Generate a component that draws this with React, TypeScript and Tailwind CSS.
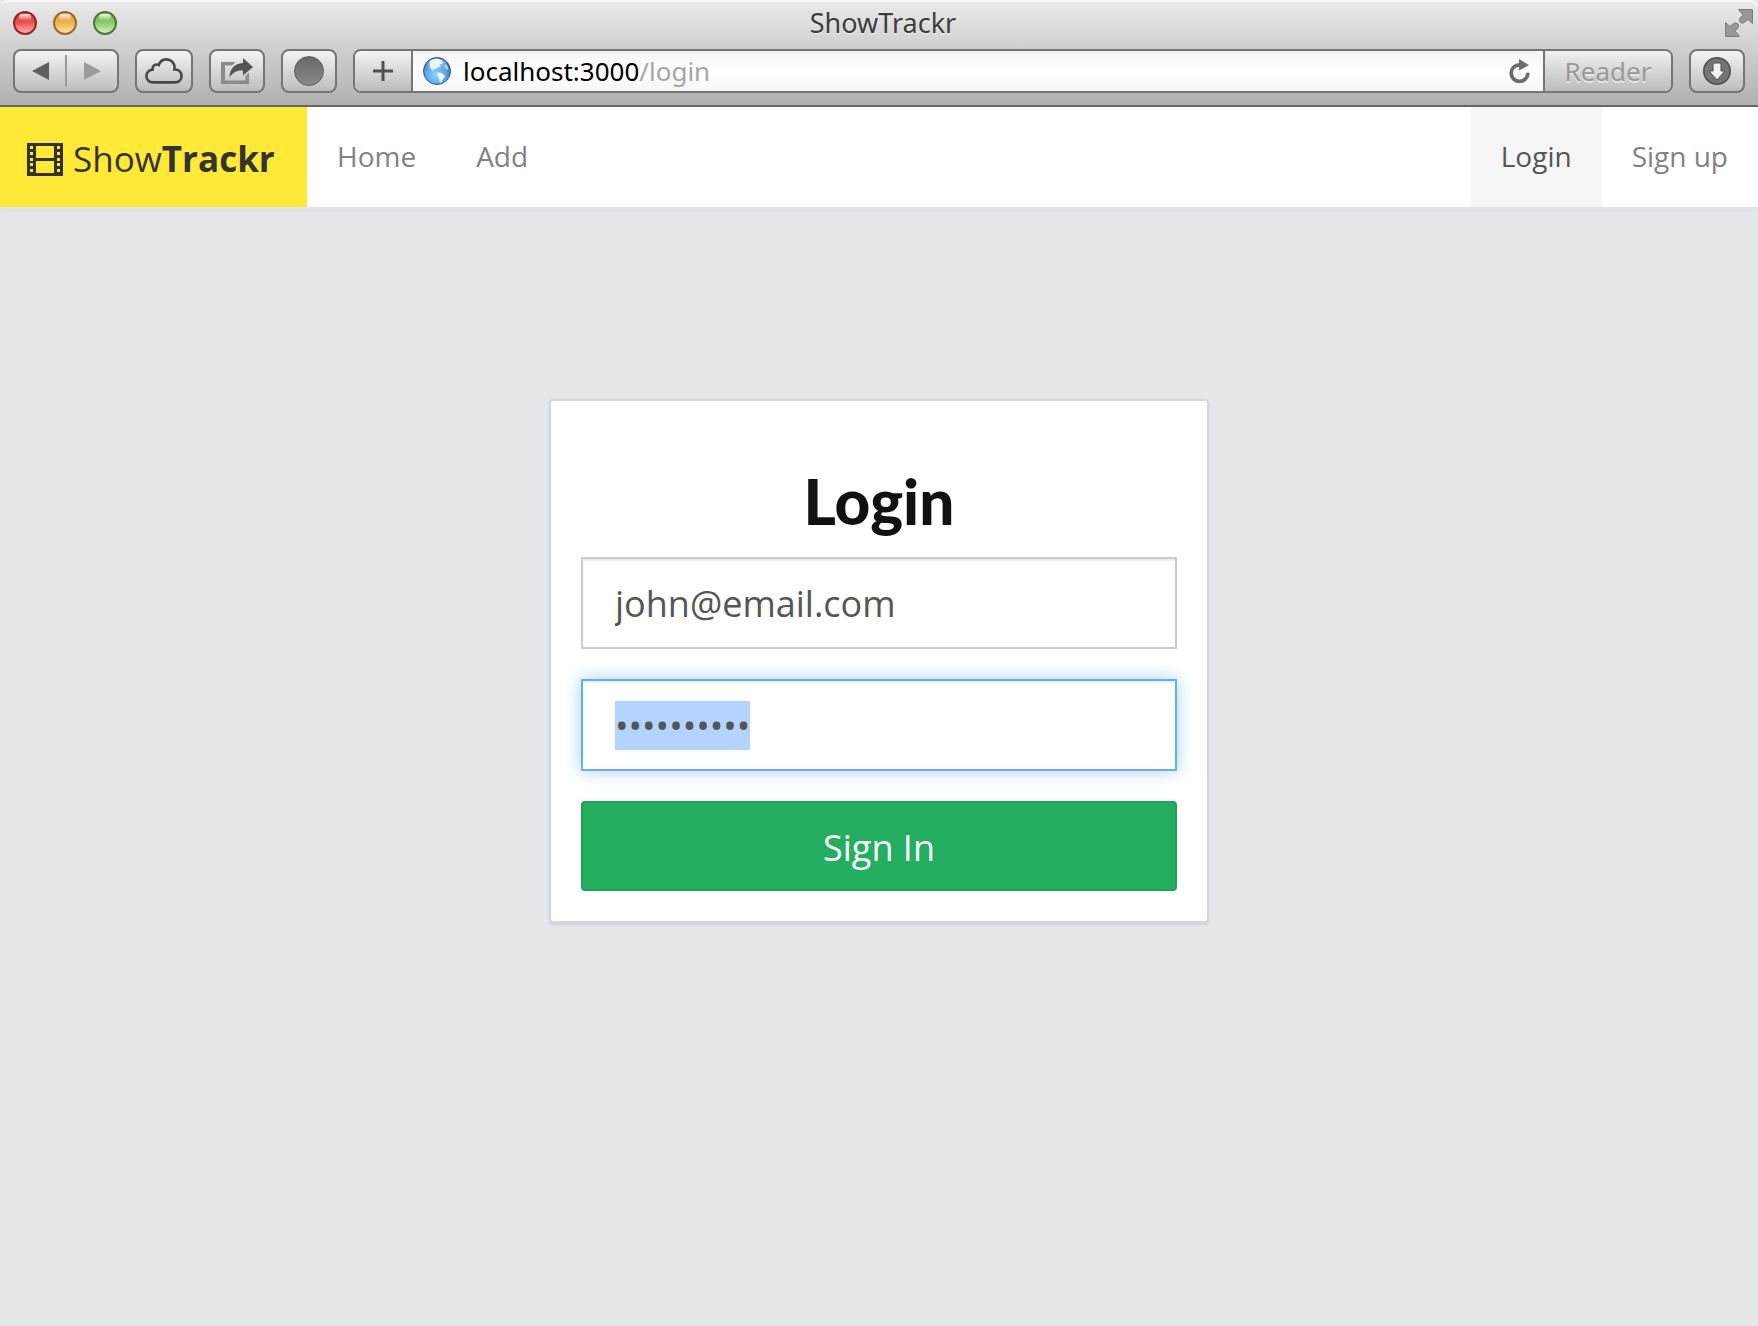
import { useEffect, useRef } from "react";
import type { ReactNode } from "react";

const toolButton =
  "flex h-11 shrink-0 items-center justify-center rounded-lg border-2 border-[#757575] bg-linear-to-b from-[#f4f4f4] to-[#bdbdbd]";

function TrafficLight({ label, className }: { label: string; className: string }) {
  return (
    <button
      type="button"
      aria-label={label}
      className={`flex size-6 flex-col items-center rounded-full border-2 pt-px ${className}`}
    >
      <span className="h-1.5 w-3 rounded-full bg-linear-to-b from-white/90 to-white/10" />
    </button>
  );
}

function ExpandIcon() {
  return (
    <svg width="28" height="28" viewBox="0 0 28 28" fill="#979797" stroke="#7c7c7c" strokeWidth="1">
      <path d="M13.500 .5H27.500V14.500L23 10.500L19.500 13.500Q17 15 15 13Q13.500 11 15 9L18 6Z" />
      <path d="M.5 13.500L5 17.500L8.500 14.500Q11 13 13 15Q14.500 17 13 19L10 22L14.500 27.500H.5Z" />
    </svg>
  );
}

function CloudIcon() {
  return (
    <svg width="38" height="26" viewBox="0 0 38 26" fill="none" stroke="#484848" strokeWidth="2.6">
      <path d="M8 24.400C4 24.400 1.400 21.600 1.400 18C1.400 14.600 4 12 7.600 11.600C7.200 7.600 10.500 5.600 13.800 7C15 3.600 18 1.400 21.300 1.400C26 1.400 29.600 5 29.600 9.600C29.600 10.300 29.500 11 29.400 11.500C33.500 11.200 36.600 14 36.600 17.800C36.600 21.600 33.800 24.400 30 24.400Z" />
    </svg>
  );
}

function ShareIcon() {
  return (
    <svg width="32" height="26" viewBox="0 0 32 26">
      <path d="M0 4H14.500L11 7.500H4V22.500H24.500V18L28 14.500V26H0Z" fill="#8b8b8b" />
      <path d="M22 0L32 9L22 17.500V12.500C16 12 12 14 8.500 19.500C8.500 11 13.500 5.500 22 5Z" fill="#555" />
    </svg>
  );
}

function GlobeIcon() {
  return (
    <svg width="28" height="28" viewBox="0 0 28 28" className="shrink-0">
      <defs>
        <radialGradient id="ocean" cx="45%" cy="65%" r="65%">
          <stop offset="0" stopColor="#8fd0ff" />
          <stop offset=".6" stopColor="#5aa6e6" />
          <stop offset="1" stopColor="#2a5fa4" />
        </radialGradient>
        <linearGradient id="gloss" x1="0" y1="0" x2="0" y2="1">
          <stop offset="0" stopColor="#fff" stopOpacity=".5" />
          <stop offset="1" stopColor="#fff" stopOpacity="0" />
        </linearGradient>
      </defs>
      <circle cx="14" cy="14" r="13.500" fill="url(#ocean)" stroke="#2a5c9c" />
      <path
        d="M7 4Q10 1.500 14 1.500L18 3L20.500 5.500L19 7.500L17 7L17.500 10L14.500 10.500L12 12.500L9.500 11.500L11 15L8.500 13L6.500 9Z"
        fill="#e2f1fc"
      />
      <path d="M14.500 15.500L18.500 16L22 19L20 22L18 26L16.500 24.500L16 21L14 18.500Z" fill="#f4faff" />
      <path d="M22 7L24.500 9L25.500 13L23.500 12.500L21.500 10Z" fill="#a8d2f4" />
      <ellipse cx="14" cy="7.500" rx="10" ry="6" fill="url(#gloss)" />
    </svg>
  );
}

function ReloadIcon() {
  return (
    <svg width="22" height="24" viewBox="0 0 22 24">
      <path d="M18.800 13.800A8.300 8.300 0 1 1 10.500 5.800" fill="none" stroke="#6c6c6c" strokeWidth="3.800" />
      <path d="M10 0L20 6.200L10 11.500Z" fill="#6c6c6c" />
    </svg>
  );
}

function DownloadIcon() {
  return (
    <svg width="28" height="28" viewBox="0 0 28 28">
      <circle cx="14" cy="14" r="13.200" fill="#757575" stroke="#505050" strokeWidth="1.600" />
      <path d="M10 6H18V14H22L14 23L6 14H10Z" fill="#f1f1f1" stroke="#4d4d4d" strokeWidth="1" />
    </svg>
  );
}

function FilmIcon() {
  const holes = [3, 9, 15, 20, 26];
  return (
    <svg width="36" height="33" viewBox="0 0 36 33">
      <rect width="36" height="33" fill="#333" />
      <g fill="#fee937">
        <rect x="9" y="3" width="18" height="12" />
        <rect x="9" y="18" width="18" height="12" />
        {holes.map((y) => (
          <g key={y}>
            <rect x="3" y={y} width="3" height="3" />
            <rect x="30" y={y} width="3" height="3" />
          </g>
        ))}
      </g>
    </svg>
  );
}

function BrowserChrome() {
  return (
    <header className="rounded-t-lg border-b-2 border-[#666] bg-linear-to-b from-[#ebebeb] to-[#b0b0b0] pb-3 font-['Noto_Sans',sans-serif] shadow-[inset_0_2px_0_#f7f7f7]">
      <div className="grid h-[49px] grid-cols-[1fr_auto_1fr] items-center pr-[5px] pb-[3px] pl-[13px]">
        <div className="flex gap-4">
          <TrafficLight
            label="Close window"
            className="border-[#8f2a28] bg-linear-to-b from-[#e0413d] via-[#f0504c] to-[#ffb0ac]"
          />
          <TrafficLight
            label="Minimize window"
            className="border-[#a0662a] bg-linear-to-b from-[#dd9a38] via-[#f0b44e] to-[#fde3a0]"
          />
          <TrafficLight
            label="Zoom window"
            className="border-[#4a7a35] bg-linear-to-b from-[#77b352] via-[#8cca68] to-[#d5f0b8]"
          />
        </div>
        <h1 className="text-[27px] leading-8 text-[#3c3c3c] [text-shadow:0_1px_0_#f4f4f4]">ShowTrackr</h1>
        <button type="button" aria-label="Enter full screen" className="justify-self-end">
          <ExpandIcon />
        </button>
      </div>
      <div className="flex gap-4 px-[13px]">
        <div className="flex h-11 w-[106px] shrink-0 items-center rounded-lg border-2 border-[#757575] bg-linear-to-b from-[#f4f4f4] to-[#bdbdbd]">
          <button type="button" aria-label="Back" className="flex flex-1 justify-center">
            <svg width="17" height="18" viewBox="0 0 17 18">
              <path d="M0 9L17 0V18Z" fill="#5e5e5e" />
            </svg>
          </button>
          <span className="h-8 w-0.5 bg-[#9a9a9a]" />
          <button type="button" aria-label="Forward" className="flex flex-1 justify-center">
            <svg width="17" height="18" viewBox="0 0 17 18">
              <path d="M17 9L0 0V18Z" fill="#9b9b9b" />
            </svg>
          </button>
        </div>
        <button type="button" aria-label="iCloud tabs" className={`${toolButton} w-[58px]`}>
          <CloudIcon />
        </button>
        <button type="button" aria-label="Share" className={`${toolButton} w-14`}>
          <ShareIcon />
        </button>
        <button type="button" aria-label="Extension" className={`${toolButton} w-14`}>
          <span className="size-[30px] rounded-full border border-[#5c5c5c] bg-linear-to-b from-[#686868] to-[#8a8a8a]" />
        </button>
        <div className="flex h-11 min-w-0 flex-1 overflow-hidden rounded-lg border-2 border-[#757575] bg-white">
          <button
            type="button"
            aria-label="Add bookmark"
            className="flex w-[58px] shrink-0 items-center justify-center border-r-2 border-[#757575] bg-linear-to-b from-[#f4f4f4] to-[#bdbdbd]"
          >
            <svg width="20" height="20" viewBox="0 0 20 20">
              <path d="M8.500 0H11.500V8.500H20V11.500H11.500V20H8.500V11.500H0V8.500H8.500Z" fill="#505050" />
            </svg>
          </button>
          <div className="flex min-w-0 flex-1 items-center bg-linear-to-b from-[#f3f3f3] via-white to-[#f6f6f6] pr-3 pl-2.5">
            <GlobeIcon />
            <p className="flex-1 pl-3 text-[26px] leading-8 text-[#a6a6a6]">
              <span className="text-black">localhost:3000</span>/login
            </p>
            <button type="button" aria-label="Reload">
              <ReloadIcon />
            </button>
          </div>
          <button
            type="button"
            className="w-32 shrink-0 border-l-2 border-[#757575] bg-linear-to-b from-[#f0f0f0] to-[#bdbdbd] text-[26px] leading-8 text-[#999] [text-shadow:0_2px_0_#e6e6e6]"
          >
            Reader
          </button>
        </div>
        <button type="button" aria-label="Downloads" className={`${toolButton} w-14`}>
          <DownloadIcon />
        </button>
      </div>
    </header>
  );
}

function NavLink({ active = false, children }: { active?: boolean; children: ReactNode }) {
  return (
    <a
      href="#"
      className={`flex items-center px-[30px] pb-0.5 text-[28px] leading-10 ${
        active ? "bg-[#f6f6f6] text-[#555]" : "text-[#828282]"
      }`}
    >
      {children}
    </a>
  );
}

function Navbar() {
  return (
    <nav className="flex h-[100px] shrink-0 bg-white shadow-[0_2px_0_#dfe4e8,0_4px_2px_#e0e2e7]">
      <a
        href="#"
        className="flex w-[307px] shrink-0 items-center gap-2.5 bg-[#fee937] pt-1 pl-[27px] text-[35px] text-[#333]"
      >
        <FilmIcon />
        <span>
          Show<b>Trackr</b>
        </span>
      </a>
      <NavLink>Home</NavLink>
      <NavLink>Add</NavLink>
      <div className="ml-auto flex">
        <NavLink active>Login</NavLink>
        <NavLink>Sign up</NavLink>
      </div>
    </nav>
  );
}

function LoginCard() {
  const password = useRef<HTMLInputElement>(null);

  useEffect(() => {
    password.current?.focus();
    password.current?.select();
  }, []);

  return (
    <form className="flex w-full max-w-[660px] flex-col rounded-sm border-2 border-[#d0d8da] bg-white p-[30px] shadow-[0_2px_2px_#cdd4d6]">
      <h2 className="mt-10 mb-[26px] text-center font-['Lato',sans-serif] text-[62px] leading-[60px] font-black text-[#111]">
        Login
      </h2>
      <input
        type="email"
        aria-label="Email"
        defaultValue="john@email.com"
        className="mb-[30px] h-[92px] w-full border-2 border-[#ccc] bg-white px-8 text-4xl text-[#555] shadow-[inset_0_2px_2px_rgba(0,0,0,0.075)] outline-none"
      />
      <input
        ref={password}
        type="password"
        aria-label="Password"
        defaultValue="supersecre"
        className="mb-[30px] h-[92px] w-full border-2 border-[#66afe9] bg-white px-8 text-4xl text-[#555] shadow-[inset_0_2px_2px_rgba(0,0,0,0.075),0_0_16px_rgba(102,175,233,0.6)] outline-none selection:bg-[#b3d4ff] selection:text-[#555]"
      />
      <button
        type="button"
        className="h-[90px] w-full rounded-sm border-2 border-[#20a257] bg-[#23ae60] pt-1 text-4xl text-white"
      >
        Sign In
      </button>
    </form>
  );
}

export default function App() {
  return (
    <div className="flex min-h-screen flex-col bg-[#e5e7eb] font-['Open_Sans',sans-serif]">
      <BrowserChrome />
      <Navbar />
      <main className="flex flex-col items-center pt-48">
        <LoginCard />
      </main>
    </div>
  );
}
